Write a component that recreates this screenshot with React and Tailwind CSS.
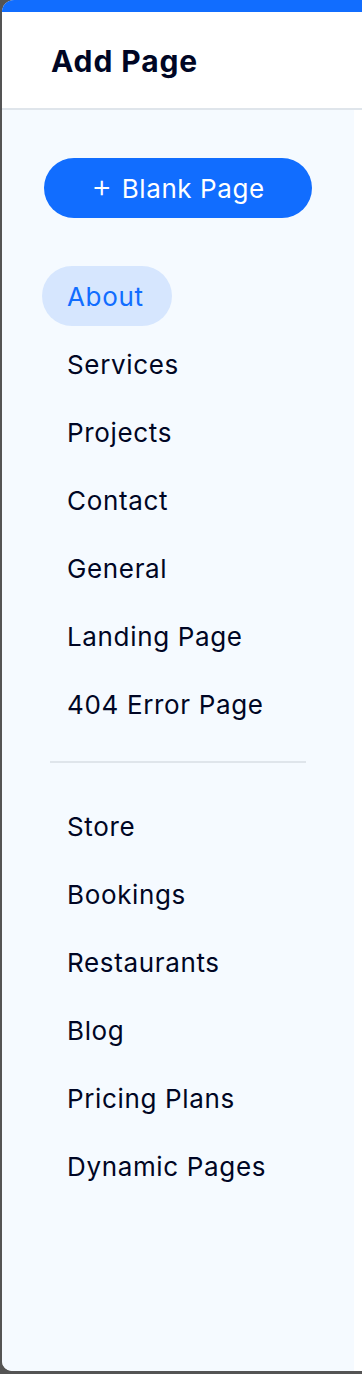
import React from "react";

const mainPages = ["About", "Services", "Projects", "Contact", "General", "Landing Page", "404 Error Page"];
const appPages = ["Store", "Bookings", "Restaurants", "Blog", "Pricing Plans", "Dynamic Pages"];

function PageItem({ label, active }) {
  return (
    <div
      className={
        "h-[60px] flex items-center rounded-full pl-[25px] pr-[28px] text-[26px] tracking-[0.65px] " +
        (active ? "bg-[#d6e6fe] text-[#116dff] self-start" : "text-[#000624]")
      }
    >
      {label}
    </div>
  );
}

export default function App() {
  return (
    <div
      className="h-[1374px] bg-[#545454] pl-[2px] pb-[3px] flex flex-col"
      style={{ fontFamily: "Inter, 'Noto Sans', sans-serif" }}
    >
      <div className="flex-1 flex flex-col bg-white rounded-tl-[12px] rounded-bl-[10px] overflow-hidden">
        <div className="h-[12px] bg-[#116dff] shrink-0"></div>
        <div className="h-[98px] border-b-2 border-[#dfe5eb] flex items-center pl-[49px] pt-[2px] shrink-0">
          <h1 className="text-[30px] font-bold text-[#000624] tracking-[0.9px]">Add Page</h1>
        </div>
        <div className="flex-1 flex">
          <div className="w-[352px] bg-[#f5faff] flex flex-col pt-[48px]">
            <button className="ml-[42px] w-[268px] h-[60px] rounded-full bg-[#116dff] text-white text-[26px] tracking-[0.6px] flex items-center justify-center gap-[9px]">
              <span className="text-[32px] font-light leading-none -mt-[4px]">+</span>
              <span>Blank Page</span>
            </button>
            <div className="flex flex-col gap-[8px] mt-[48px] pl-[40px]">
              {mainPages.map((p, i) => (
                <PageItem key={p} label={p} active={i === 0} />
              ))}
            </div>
            <div className="ml-[48px] w-[256px] h-[2px] bg-[#dfe5eb] mt-[27px] mb-[33px]"></div>
            <div className="flex flex-col gap-[8px] pl-[40px]">
              {appPages.map((p) => (
                <PageItem key={p} label={p} />
              ))}
            </div>
          </div>
          <div className="flex-1 bg-white"></div>
        </div>
      </div>
    </div>
  );
}
